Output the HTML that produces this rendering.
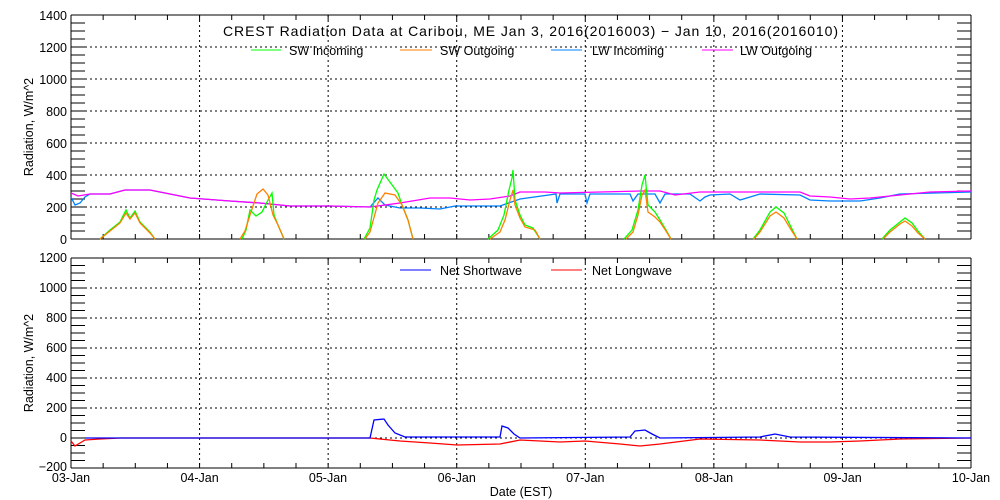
<!DOCTYPE html>
<html><head><meta charset="utf-8"><style>
body{margin:0;background:#fff;width:1000px;height:500px;overflow:hidden}
svg{display:block;font-family:"Liberation Sans",sans-serif;font-size:12.5px}
text{fill:#000}
</style></head><body>
<svg id="s" width="1000" height="500" viewBox="0 0 1000 500" xmlns="http://www.w3.org/2000/svg">
<g id="g" stroke="#000" fill="none"></g>
<!-- Top plot labels -->
<g text-anchor="end">
<text x="67" y="20">1400</text><text x="67" y="52">1200</text><text x="67" y="84">1000</text>
<text x="67" y="116">800</text><text x="67" y="148">600</text><text x="67" y="180">400</text>
<text x="67" y="212">200</text><text x="67" y="244">0</text>
<text x="67" y="262">1200</text><text x="67" y="292">1000</text><text x="67" y="322">800</text>
<text x="67" y="352">600</text><text x="67" y="382">400</text><text x="67" y="412">200</text>
<text x="67" y="442">0</text><text x="67" y="471">−200</text>
</g>
<text transform="translate(33,127) rotate(-90)" text-anchor="middle">Radiation, W/m^2</text>
<text transform="translate(33,363) rotate(-90)" text-anchor="middle">Radiation, W/m^2</text>
<g text-anchor="middle">
<text x="71" y="482">03-Jan</text><text x="199.6" y="482">04-Jan</text><text x="328" y="482">05-Jan</text>
<text x="456.7" y="482">06-Jan</text><text x="585.3" y="482">07-Jan</text><text x="714" y="482">08-Jan</text>
<text x="842.6" y="482">09-Jan</text><text x="971" y="482">10-Jan</text>
<text x="521" y="496">Date (EST)</text>
</g>
<text x="223" y="36" font-size="14" textLength="615">CREST Radiation Data at Caribou, ME   Jan  3, 2016(2016003) − Jan 10, 2016(2016010)</text>
<g>
<line x1="251" y1="50" x2="281" y2="50" stroke="#00ff00"/><text x="289" y="55">SW Incoming</text>
<line x1="400" y1="50" x2="432" y2="50" stroke="#ff7f00"/><text x="440" y="55">SW Outgoing</text>
<line x1="551" y1="50" x2="582" y2="50" stroke="#0080ff"/><text x="592" y="55">LW Incoming</text>
<line x1="702" y1="50" x2="733" y2="50" stroke="#ff00ff"/><text x="740" y="55">LW Outgoing</text>
<line x1="400" y1="270" x2="431" y2="270" stroke="#0000ff"/><text x="440" y="275">Net Shortwave</text>
<line x1="551" y1="270" x2="582" y2="270" stroke="#ff0000"/><text x="592" y="275">Net Longwave</text>
</g>
<g fill="none" stroke-width="1.3">
<polyline stroke="#0080ff" points="71,197 75,205 80,203 85,197 90,194 110,194 125,190 150,190 165,193 190,198 230,201 260,203 290,206 330,206 370,207 378,198 385,205 400,208 420,208 440,209 455,206 470,206 500,206 520,199 556,194 557,203 560,194 585,194 587,203 590,194 630,194 633,201 638,194 655,194 660,203 665,194 690,194 700,201 705,197 710,195 730,194 740,200 760,194 800,195 810,200 830,201 860,201 880,198 900,194 971,192"/>
<polyline stroke="#ff00ff" points="71,193 78,196 90,194 110,194 125,190 150,190 165,193 190,198 230,201 260,203 290,206 330,206 370,207 400,203 430,198 450,198 470,200 490,199 510,196 520,192 545,192 560,193 600,192 640,191 660,191 675,195 700,192 760,192 800,192 810,196 830,197 850,199 870,198 900,195 930,192 971,191"/>
<polyline stroke="#00ff00" points="100,239 110,230 120,222 126,210 130,218 135,211 140,222 150,232 155,239 M0,0"/>
<polyline stroke="#00ff00" points="242,239 246,230 250,210 256,216 262,212 268,200 272,193 274,215 278,225 284,239"/>
<polyline stroke="#00ff00" points="364,239 370,228 374,200 377,190 384,174 398,193 402,205 408,220 413,239"/>
<polyline stroke="#00ff00" points="488,239 498,230 504,215 509,190 512,178 513,170 515,200 520,215 525,225 533,228 540,239"/>
<polyline stroke="#00ff00" points="624,239 632,230 638,210 642,185 645,175 648,205 655,212 660,220 666,230 671,239"/>
<polyline stroke="#00ff00" points="753,239 760,230 770,212 776,207 784,213 790,225 797,239"/>
<polyline stroke="#00ff00" points="882,239 890,230 900,222 905,218 912,223 918,231 925,239"/>
<polyline stroke="#ff7f00" points="100,239 110,231 120,223 126,213 130,219 135,213 140,223 150,233 155,239"/>
<polyline stroke="#ff7f00" points="240,239 245,231 250,215 257,194 263,189 268,195 273,215 278,225 284,239"/>
<polyline stroke="#ff7f00" points="365,239 370,232 378,203 385,193 395,195 402,205 408,220 413,239"/>
<polyline stroke="#ff7f00" points="490,239 500,232 505,220 510,200 513,190 515,205 520,218 525,227 535,230 540,239"/>
<polyline stroke="#ff7f00" points="626,239 633,232 638,215 642,195 645,190 648,212 655,217 660,222 666,231 671,239"/>
<polyline stroke="#ff7f00" points="754,239 760,232 770,216 776,212 784,218 790,228 797,239"/>
<polyline stroke="#ff7f00" points="883,239 890,232 900,224 905,221 912,226 918,233 925,239"/>
<polyline stroke="#ff0000" points="71,441 75,446 80,443 85,440 100,439 120,438 370,438 400,441 430,443 457,445 500,444 520,440 540,441 560,442 585,441 620,444 640,446 660,444 700,439 760,440 800,442 830,442 860,441 900,439 971,438"/>
<polyline stroke="#0000ff" points="85,438 370,438 374,420 384,419 388,425 395,433 405,437 500,437 502,426 508,428 514,434 520,438 630,437 635,431 645,430 652,434 660,438 760,437 775,434 790,437 971,438"/>
</g>
</svg>
<script>
var g=document.getElementById('g'),h='';
function L(a,b,c,d,ex){h+='<line x1="'+a+'" y1="'+b+'" x2="'+c+'" y2="'+d+'"'+(ex||'')+'/>';}
var D=' stroke-dasharray="2,3"';
[[15,239,32,224/7*0+0],[258,468,30]].forEach(function(p,i){
 var t=p[0],b=p[1];
 L(71,t,971,t);L(71,b,971,b);L(71,t,71,b);L(971,t,971,b);
 for(var k=1;k<7;k++){var x=71+k*900/7;L(x,t,x,b,D);}
 var z=i==0?239:438,s=i==0?32:30;
 for(var v=-200;v<=1400;v+=50){var y=z-v*s/200;if(y<t-0.1||y>b+0.1)continue;L(71,y,85,y);L957=0;L(957,y,971,y);if(v%200==0&&y>t+1&&y<b-1)L(85,y,957,y,D);}
 for(var k=1;k<28;k++){var x=71+k*900/28;L(x,b,x,b-5);L(x,t,x,t+5);}
});
g.innerHTML=h;
</script>
</body></html>
